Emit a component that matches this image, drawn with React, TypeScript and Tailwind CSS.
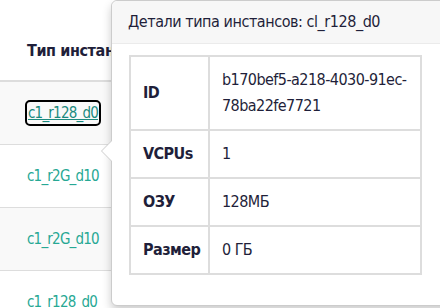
import React from "react";

const font = { fontFamily: '"DejaVu Sans Condensed", "DejaVu Sans", sans-serif' };

export default function App() {
  const rows = [
    { name: "c1_r128_d0", bg: "bg-[#f9f9f9]", focus: true },
    { name: "c1_r2G_d10", bg: "bg-white" },
    { name: "c1_r2G_d10", bg: "bg-[#f9f9f9]" },
    { name: "c1_r128_d0", bg: "bg-white" },
  ];
  return (
    <div className="relative w-[440px] h-[308px] overflow-hidden bg-white text-[#1f1f3a]" style={font}>
      <div className="flex flex-col">
        <div className="h-[82px] flex items-end pb-[17px] pl-[27px] border-b-2 border-[#dddddd]">
          <span className="font-bold text-[16px] tracking-[-0.4px] whitespace-nowrap">Тип инстансов</span>
        </div>
        {rows.map((r, i) => (
          <div key={i} className={`h-[63px] flex items-center pl-[27px] border-b border-[#dddddd] ${r.bg}`}>
            {r.focus ? (
              <span className="text-[15px] tracking-[-0.8px] text-[#1b8a7e] underline outline-2 outline-black rounded-[3px] px-[1px]">{r.name}</span>
            ) : (
              <span className="text-[15px] tracking-[-0.8px] text-[#27a894]">{r.name}</span>
            )}
          </div>
        ))}
      </div>

      <div className="absolute left-[111px] top-0 w-[340px] h-[306px] bg-white border border-[#cccccc] rounded-[6px] shadow-[0_5px_10px_rgba(0,0,0,0.2)]">
        <div className="absolute left-[-11px] top-[139px] w-0 h-0 border-y-[11px] border-y-transparent border-r-[11px] border-r-[#cccccc]" />
        <div className="absolute left-[-10px] top-[140px] w-0 h-0 border-y-[10px] border-y-transparent border-r-[10px] border-r-white" />
        <div className="h-[43px] flex items-center pl-[16px] bg-[#f7f7f7] border-b border-[#ebebeb] rounded-t-[6px] text-[16px] tracking-[-0.45px] whitespace-nowrap">
          Детали типа инстансов: cl_r128_d0
        </div>
        <div className="pt-[11px] pl-[17px]">
          <table className="w-[293px] table-fixed border-2 border-[#dddddd] border-collapse text-[16px] leading-[26px] tracking-[-0.55px]">
            <colgroup>
              <col className="w-[79px]" />
              <col />
            </colgroup>
            <tbody>
              <tr className="border-b-2 border-[#dddddd]">
                <td className="px-3 py-[10px] font-bold border-r-2 border-[#dddddd]">ID</td>
                <td className="px-3 py-[10px] whitespace-nowrap">
                  b170bef5-a218-4030-91ec-
                  <br />
                  78ba22fe7721
                </td>
              </tr>
              <tr className="border-b-2 border-[#dddddd]">
                <td className="px-3 py-[10px] font-bold border-r-2 border-[#dddddd]">VCPUs</td>
                <td className="px-3 py-[10px]">1</td>
              </tr>
              <tr className="border-b-2 border-[#dddddd]">
                <td className="px-3 py-[10px] font-bold border-r-2 border-[#dddddd]">ОЗУ</td>
                <td className="px-3 py-[10px]">128МБ</td>
              </tr>
              <tr>
                <td className="px-3 py-[10px] font-bold border-r-2 border-[#dddddd]">Размер</td>
                <td className="px-3 py-[10px]">0 ГБ</td>
              </tr>
            </tbody>
          </table>
        </div>
      </div>
    </div>
  );
}
